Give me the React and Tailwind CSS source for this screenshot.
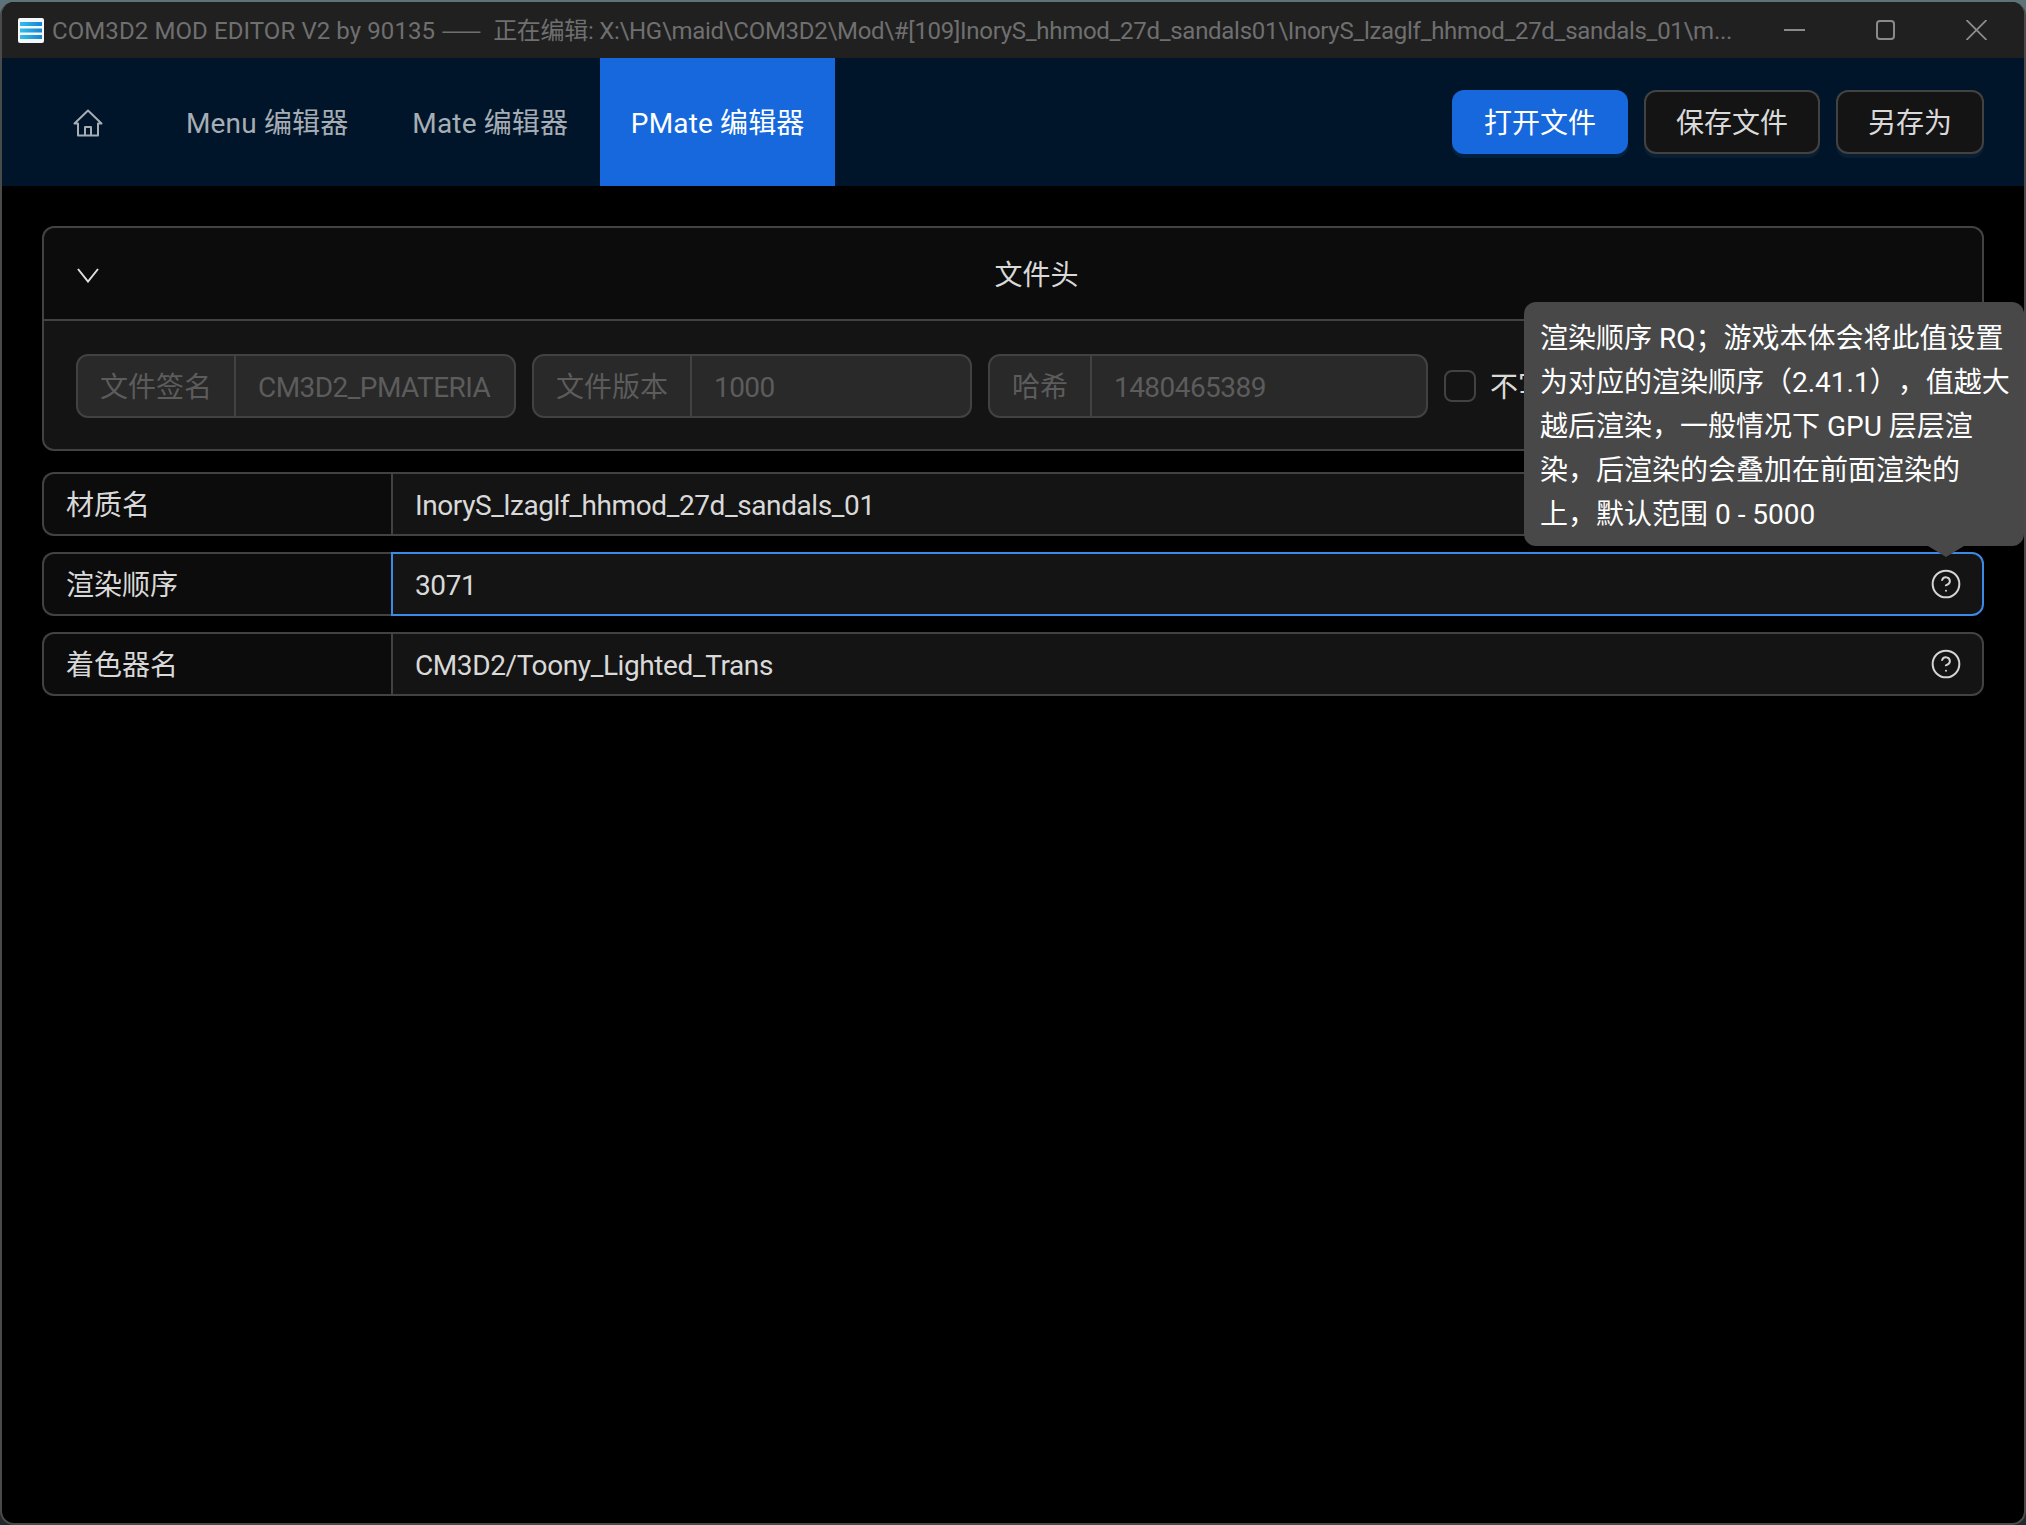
import { CircleHelp } from 'lucide-react';

const NAV_ITEMS = ['Menu 编辑器', 'Mate 编辑器'];

function AppIcon() {
  return (
    <svg width="26" height="25" viewBox="0 0 26 25" className="shrink-0">
      <defs>
        <linearGradient id="bar" x1="0" y1="0" x2="1" y2="0">
          <stop offset="0" stopColor="#35bdea" />
          <stop offset="1" stopColor="#1484d2" />
        </linearGradient>
      </defs>
      <rect width="26" height="25" rx="2" fill="#f4f8fb" />
      <rect x="2" y="4" width="22" height="4" fill="url(#bar)" />
      <rect x="2" y="10.5" width="22" height="4" fill="url(#bar)" />
      <rect x="2" y="17" width="22" height="4" fill="url(#bar)" />
    </svg>
  );
}

function WindowControls() {
  return (
    <div className="mr-[2px] flex shrink-0 text-[#8a8a8a]">
      <div className="flex w-[91px] justify-center">
        <svg width="21" height="20" viewBox="0 0 21 20" fill="none" stroke="currentColor" strokeWidth="2">
          <path d="M0 10H21" />
        </svg>
      </div>
      <div className="flex w-[91px] justify-center">
        <svg width="21" height="20" viewBox="0 0 21 20" fill="none" stroke="currentColor" strokeWidth="2">
          <rect x="2" y="1" width="17" height="18" rx="3" />
        </svg>
      </div>
      <div className="flex w-[91px] justify-center">
        <svg width="21" height="20" viewBox="0 0 21 20" fill="none" stroke="currentColor" strokeWidth="1.8">
          <path d="M0.5 0L20.5 20M20.5 0L0.5 20" />
        </svg>
      </div>
    </div>
  );
}

function TitleBar() {
  return (
    <div className="flex h-14 items-center bg-[#202020] pl-4">
      <AppIcon />
      <p className="ml-2 w-0 flex-1 whitespace-nowrap text-[24px] leading-none text-[#6f6f6f]">
        <span className="tracking-[0.09px]">COM3D2 MOD EDITOR V2 by 90135 </span>
        <span className="font-['Noto_Sans_CJK_SC'] tracking-[6px]">——</span>
        <span className="tracking-[-0.29px]"> 正在编辑: X:\HG\maid\COM3D2\Mod\#[109]InoryS_hhmod_27d_sandals01\InoryS_lzaglf_hhmod_27d_sandals_01\m...</span>
      </p>
      <WindowControls />
    </div>
  );
}

function HomeIcon() {
  return (
    <svg width="30" height="28" viewBox="0 0 30 28" fill="none" stroke="currentColor" strokeWidth="2" strokeLinejoin="round">
      <path d="M15 1.5L28.5 14.5H25V26.5H5V14.5H1.5Z" />
      <path d="M12 26.5V18H18V26.5" />
    </svg>
  );
}

function NavBar() {
  return (
    <div className="flex h-32 items-center bg-[#00152a] pr-10">
      <div className="flex h-full items-center text-[28px] tracking-[0.15px] text-[#a6adb4]">
        <div className="flex h-full w-[152px] items-center pl-[71px] pt-[2px]">
          <HomeIcon />
        </div>
        {NAV_ITEMS.map(item => (
          <div key={item} className="flex h-full items-center px-8 pt-[3px] whitespace-nowrap">{item}</div>
        ))}
        <div className="flex h-full w-[235px] items-center justify-center bg-[#1668dc] pt-[3px] text-white">PMate 编辑器</div>
      </div>
      <div className="ml-auto flex gap-4 text-[28px]">
        <button className="h-16 w-44 rounded-xl bg-[#1668dc] pt-[3px] text-white shadow-[0_4px_0_rgba(5,145,255,0.1)]">打开文件</button>
        <button className="h-16 w-44 rounded-xl border-2 border-[#424242] bg-[#141414] pt-[3px] text-[#d9d9d9] shadow-[0_4px_0_rgba(255,255,255,0.04)]">保存文件</button>
        <button className="h-16 w-[148px] rounded-xl border-2 border-[#424242] bg-[#141414] pt-[3px] text-[#d9d9d9] shadow-[0_4px_0_rgba(255,255,255,0.04)]">另存为</button>
      </div>
    </div>
  );
}

function DisabledField({ label, value, labelWidth }) {
  return (
    <div className="flex h-16 w-[440px] shrink-0 rounded-xl border-2 border-[#424242] bg-[#292929] text-[#5c5c5c]">
      <div className={`flex shrink-0 items-center justify-center border-r-2 border-[#424242] pt-[3px] ${labelWidth}`}>{label}</div>
      <div className="flex items-center px-[22px] pt-[3px] tracking-[-0.55px] whitespace-nowrap">{value}</div>
    </div>
  );
}

function FieldRow({ label, value, focused, help }) {
  return (
    <div className="flex h-16 text-[28px] text-[#d9d9d9]">
      <div className="flex w-[349px] shrink-0 items-center rounded-l-xl border-2 border-r-0 border-[#424242] bg-[#0c0c0c] pl-[22px] pt-[3px]">
        {label}
      </div>
      <div className={`flex flex-1 items-center rounded-r-xl border-2 bg-[#141414] pl-[22px] pr-[20px] ${focused ? 'border-[#3c89e8]' : 'border-[#424242]'}`}>
        <span className="pt-[3px] tracking-[-0.4px]">{value}</span>
        {help && <CircleHelp className="ml-auto h-8 w-8 stroke-[1.5] text-[#d4d4d4]" />}
      </div>
    </div>
  );
}

function Tooltip() {
  return (
    <div className="absolute left-[1524px] top-[302px] z-10 h-[244px] w-[500px] rounded-xl bg-[#484848] pb-[9px] pl-4 pr-[10px] pt-[15px] text-[28px] leading-[44px] text-white">
      渲染顺序 RQ；游戏本体会将此值设置为对应的渲染顺序（2.41.1），值越大越后渲染，一般情况下 GPU 层层渲染，后渲染的会叠加在前面渲染的上，默认范围 0 - 5000
      <div className="absolute left-[404px] top-full h-0 w-0 border-x-[18px] border-t-[11px] border-x-transparent border-t-[#484848]" />
    </div>
  );
}

export default function App() {
  return (
    <div className="relative h-[1525px] w-[2026px] overflow-hidden bg-gradient-to-b from-[#5d7378] to-[#1f2a2e] pt-[2px] font-['Roboto','Noto_Sans_CJK_SC',sans-serif] leading-[44px] [text-spacing-trim:space-all]">
      <div className="h-[1523px] overflow-hidden rounded-[14px] border-x-2 border-b-2 border-[#4a4a4a] bg-black">
        <TitleBar />
        <NavBar />
        <div className="flex flex-col gap-4 pl-[40px] pr-[40px] pt-10">
          <div className="mb-[5px] rounded-xl border-2 border-[#424242] bg-[#141414] text-[28px]">
            <div className="flex h-[93px] items-start rounded-t-xl border-b-2 border-[#424242] bg-[#0c0c0c] pl-[33px] pr-2 text-[#d9d9d9]">
              <svg width="22" height="15" viewBox="0 0 22 15" fill="none" stroke="#e0e0e0" strokeWidth="2" className="mt-[40px] shrink-0">
                <path d="M1 1L11 13.5L21 1" />
              </svg>
              <div className="mt-[26px] flex-1 text-center">文件头</div>
            </div>
            <div className="flex h-[128px] items-center gap-4 pl-8 pt-[2px]">
              <DisabledField label="文件签名" value="CM3D2_PMATERIA" labelWidth="w-[158px]" />
              <DisabledField label="文件版本" value="1000" labelWidth="w-[158px]" />
              <DisabledField label="哈希" value="1480465389" labelWidth="w-[102px]" />
              <div className="h-8 w-8 shrink-0 rounded-lg border-2 border-[#424242]" />
              <span className="-ml-[2px] whitespace-nowrap pt-[3px] text-[#d9d9d9]">不写入</span>
            </div>
          </div>
          <FieldRow label="材质名" value="InoryS_lzaglf_hhmod_27d_sandals_01" />
          <FieldRow label="渲染顺序" value="3071" focused help />
          <FieldRow label="着色器名" value="CM3D2/Toony_Lighted_Trans" help />
        </div>
      </div>
      <Tooltip />
    </div>
  );
}
